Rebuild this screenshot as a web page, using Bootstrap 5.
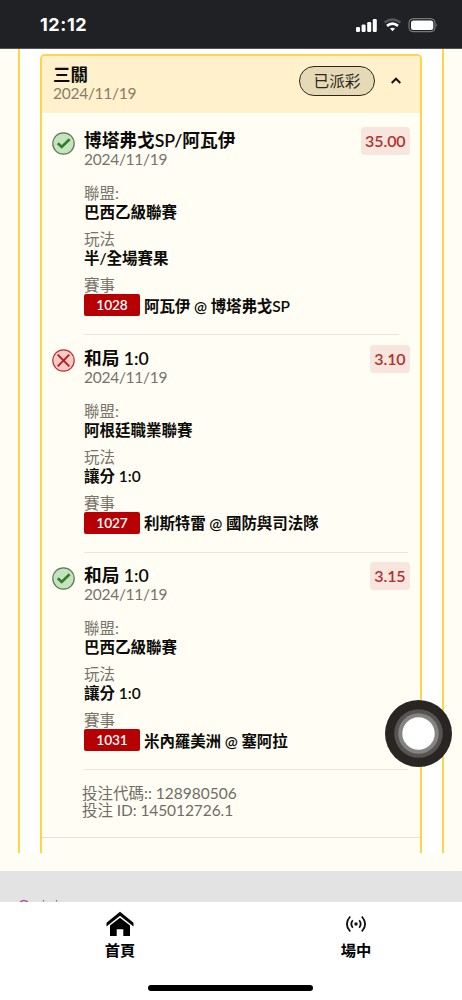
<!DOCTYPE html>
<html lang="zh-Hant">
<head>
<meta charset="utf-8">
<meta name="viewport" content="width=device-width, initial-scale=1">
<title>投注紀錄</title>
<link href="https://cdn.jsdelivr.net/npm/bootstrap@5.3.0/dist/css/bootstrap.min.css" rel="stylesheet">
<style>
body{font-family:Lato,"Noto Sans CJK TC",sans-serif;font-size:15.5px;color:#0c0b08;background:#fffdf4;height:1000px;overflow:hidden}
.statusbar{height:49px;background:#202125;padding:2px 24px 0 40px;border-bottom:1px solid #55524c}
.clock{font:700 18px/1 Inter,sans-serif;letter-spacing:.6px}
.history{height:822px;padding:0 18px;background:#fffdf4}
.frame{height:804px;border:solid #fcd549;border-width:0 2px;padding:5px 20px 0;background:#fff}
.slip{height:799px;border:2px solid #fcd549;border-bottom:0;border-radius:5px 5px 0 0;background:#fffdf4}
.slip-head{height:57px;background:#fff1cb;padding:0 19px 0 11px;border-radius:3px 3px 0 0}
.slip-name{font-size:17.5px;line-height:20px;font-weight:600;padding-top:9px}
.day{line-height:16px;color:#77736a;letter-spacing:-.27px}
.leg .day{line-height:15px}
.slip-head .day{color:#857d69}
.paid{width:76px;height:30px;border:1.4px solid #2c281e;background:#e5dab5;font-size:15.7px;color:#2c281e;padding-top:2px}
.leg{height:217.5px;padding:12.5px 10px 0 10px}
.legs{padding-top:4.5px}
.mark-icon{width:23px;height:23px;margin-top:1.7px;margin-right:9px}
.leg-main{border-bottom:1px solid #e8e5df;height:205px;margin-right:2px}
.leg:first-child .leg-main{margin-right:11px}
.pick{font-size:17.7px;line-height:22px;font-weight:600;letter-spacing:-.03px}
.cap{line-height:18px;color:#77736a;margin-top:8px}
.cap-first{margin-top:17px}
.val{line-height:20px;font-weight:600;font-size:15.5px}
.meet{letter-spacing:-.1px;padding-top:1px}
.code{width:56px;height:22px;line-height:22px;background:#b60003;border-radius:2px;font-size:13.7px;margin-right:4px;letter-spacing:-.1px}
.match-row{margin-top:.3px}
.odds{height:28px;line-height:28px;padding:0 4.500px;background:#f8e5de;color:#ae332e;font-size:16px;font-weight:600;letter-spacing:-.1px;border-radius:4px;right:10px;top:9.5px}
.ids{height:67.5px;padding:15px 0 0 40px;line-height:17px;color:#716d66;border-bottom:1px solid #e2e0da;font-size:15.5px}
.ids div+div{letter-spacing:-.08px}
.below{height:31px;background:#e3e3e3}
.tabs{height:98px}
.tab{width:80px;font-size:15.3px;line-height:20px;font-weight:600}
.tab-home{left:8px}
.tab-live{margin-right:42px}
.tab svg{margin-top:8px}
.tab-home span{margin-top:4px}
.tab-live span{margin-top:2px}
.touch{width:67px;height:67px;left:385px;top:700px;z-index:3}
.home-line{width:165px;height:6px;left:148px;top:985px}
</style>
</head>
<body>
<header class="statusbar d-flex align-items-center justify-content-between text-white">
  <span class="clock">12:12</span>
  <svg width="84" height="18" viewBox="0 0 84 18">
    <g fill="#fff"><rect x="2" y="11" width="4" height="5" rx="1.3"/><rect x="7.6" y="8.5" width="4" height="7.5" rx="1.3"/><rect x="13.2" y="6" width="4" height="10" rx="1.3"/><rect x="18.8" y="3" width="4" height="13" rx="1.3"/>
    <path d="M36 12.5Q38.500 10.800 41 12.500L38.500 15.200Z"/></g>
    <path d="M33 9.900Q38.500 5.400 44 9.900" fill="none" stroke="#fff" stroke-width="2.700"/>
    <path d="M30.500 6.500Q38.500 0.500 46.500 6.500" fill="none" stroke="#55565a" stroke-width="2.200"/>
    <rect x="55" y="2.700" width="26" height="13" rx="4" fill="none" stroke="#8b8c8e"/><rect x="57" y="4.500" width="22.300" height="9.500" rx="2.500" fill="#fff"/><path d="M82.500 7q1.500 2 0 4.500z" fill="#8b8c8e"/>
  </svg>
</header>

<main class="history">
  <div class="frame">
    <section class="slip">
      <div class="slip-head d-flex">
        <div class="flex-grow-1"><div class="slip-name">三關</div><div class="day">2024/11/19</div></div>
        <div class="d-flex align-items-center pb-2">
          <span class="paid rounded-pill d-flex align-items-center justify-content-center">已派彩</span>
          <svg class="ms-3" width="10" height="8" viewBox="0 0 10 8"><path d="M.7 6L5 1.700 9.300 6" fill="none" stroke="#17140c" stroke-width="2"/></svg>
        </div>
      </div>
      <div class="legs">
        <article class="leg d-flex position-relative">
          <svg class="mark-icon flex-shrink-0" viewBox="0 0 23 23"><circle cx="11.500" cy="11.500" r="10.700" fill="#c4e4bd" stroke="#5d7857" stroke-width="1.200"/><path d="M5.800 11.300L9.700 15 17.600 7.300" fill="none" stroke="#37792c" stroke-width="2.600"/></svg>
          <div class="leg-main flex-grow-1">
            <div class="pick">博塔弗戈SP/阿瓦伊</div><div class="day">2024/11/19</div>
            <div class="cap cap-first">聯盟:</div><div class="val">巴西乙級聯賽</div>
            <div class="cap">玩法</div><div class="val">半/全場賽果</div>
            <div class="cap">賽事</div><div class="val match-row d-flex align-items-center"><span class="code text-white text-center">1028</span><span class="meet">阿瓦伊 @ 博塔弗戈SP</span></div>
          </div>
          <span class="odds position-absolute">35.00</span>
        </article>
        <article class="leg d-flex position-relative">
          <svg class="mark-icon flex-shrink-0" viewBox="0 0 23 23"><circle cx="11.500" cy="11.500" r="10.700" fill="#fccac4" stroke="#b0383a" stroke-width="1.200"/><path d="M5.700 5.700L17.300 17.300M17.300 5.700L5.700 17.300" fill="none" stroke="#b21e22" stroke-width="1.900"/></svg>
          <div class="leg-main flex-grow-1">
            <div class="pick">和局 1:0</div><div class="day">2024/11/19</div>
            <div class="cap cap-first">聯盟:</div><div class="val">阿根廷職業聯賽</div>
            <div class="cap">玩法</div><div class="val">讓分 1:0</div>
            <div class="cap">賽事</div><div class="val match-row d-flex align-items-center"><span class="code text-white text-center">1027</span><span class="meet">利斯特雷 @ 國防與司法隊</span></div>
          </div>
          <span class="odds position-absolute">3.10</span>
        </article>
        <article class="leg d-flex position-relative">
          <svg class="mark-icon flex-shrink-0" viewBox="0 0 23 23"><circle cx="11.500" cy="11.500" r="10.700" fill="#c4e4bd" stroke="#5d7857" stroke-width="1.200"/><path d="M5.800 11.300L9.700 15 17.600 7.300" fill="none" stroke="#37792c" stroke-width="2.600"/></svg>
          <div class="leg-main flex-grow-1">
            <div class="pick">和局 1:0</div><div class="day">2024/11/19</div>
            <div class="cap cap-first">聯盟:</div><div class="val">巴西乙級聯賽</div>
            <div class="cap">玩法</div><div class="val">讓分 1:0</div>
            <div class="cap">賽事</div><div class="val match-row d-flex align-items-center"><span class="code text-white text-center">1031</span><span class="meet">米內羅美洲 @ 塞阿拉</span></div>
          </div>
          <span class="odds position-absolute">3.15</span>
        </article>
      </div>
      <div class="ids"><div>投注代碼:: 128980506</div><div>投注 ID: 145012726.1</div></div>
    </section>
  </div>
</main>

<div class="below d-flex align-items-end">
  <svg width="80" height="3" viewBox="0 0 80 3"><path d="M20 3Q24 .2 28 3" fill="none" stroke="#a05aa0" stroke-width="1.500"/><path d="M43.500 1v1.500M56.500 1v1.500" stroke="#77777d" stroke-width="1.200"/></svg>
</div>

<nav class="tabs d-flex justify-content-between bg-white ps-5 pe-4">
  <a class="tab tab-home ms-4 text-center text-decoration-none text-black d-flex flex-column align-items-center position-relative">
    <svg width="28" height="26" viewBox="0 0 28 26"><path d="M.5 12.800L14 1.800 27.500 12.800V16.500L14 5.700.5 16.500Z"/><path d="M4 15.500L14 7.800 24 15.500V26H17.300V19.200H10.700V26H4Z"/></svg>
    <span>首頁</span>
  </a>
  <a class="tab tab-live text-center text-decoration-none text-black d-flex flex-column align-items-center">
    <svg width="22" height="28" viewBox="0 0 22 28" fill="none" stroke="#111" stroke-width="1.800"><circle cx="11" cy="14" r="1.700" fill="#111" stroke="none"/><path d="M7.800 10.200Q4.800 14 7.800 17.800M14.200 10.200Q17.200 14 14.200 17.800M5.200 6.500Q-1.500 14 5.200 21.500M16.800 6.500Q23.500 14 16.800 21.500"/></svg>
    <span>場中</span>
  </a>
</nav>
<svg class="touch position-absolute" viewBox="0 0 67 67"><circle cx="33.500" cy="33.500" r="33.500" fill="#282522"/><circle cx="33.500" cy="33.500" r="24.300" fill="#555451"/><circle cx="33.500" cy="33.500" r="20.300" fill="#858482"/><circle cx="33.500" cy="33.500" r="16.200" fill="#fff"/></svg>
<div class="home-line position-absolute bg-black rounded-pill"></div>
<script src="https://cdn.jsdelivr.net/npm/bootstrap@5.3.0/dist/js/bootstrap.bundle.min.js"></script>
</body>
</html>
